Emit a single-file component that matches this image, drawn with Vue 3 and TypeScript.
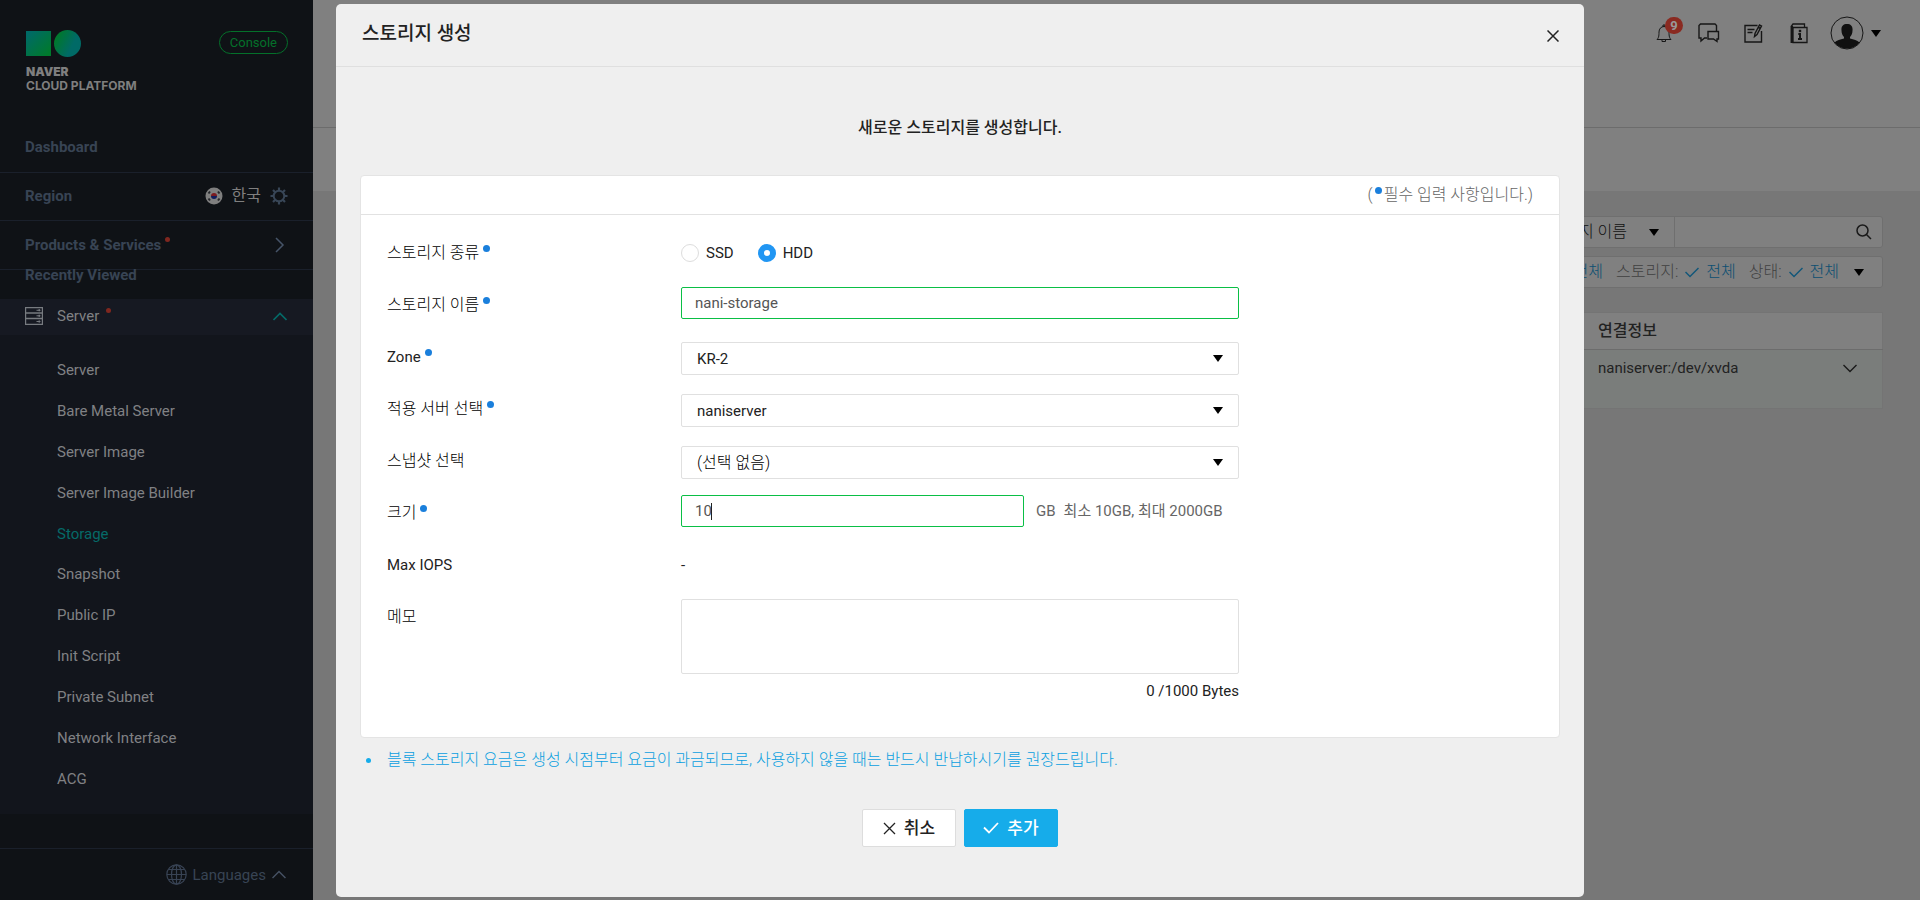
<script setup lang="ts">
import { ref } from 'vue'

interface Field {
  value: string
  label: string
}

const menu: string[] = [
  'Server', 'Bare Metal Server', 'Server Image', 'Server Image Builder', 'Storage', 'Snapshot',
  'Public IP', 'Init Script', 'Private Subnet', 'Network Interface', 'ACG',
]
const active = 'Storage'

const kinds: Field[] = [
  { value: 'ssd', label: 'SSD' },
  { value: 'hdd', label: 'HDD' },
]
const kind = ref('hdd')
const storageName = ref('nani-storage')
const zone = ref('KR-2')
const server = ref('naniserver')
const snapshot = ref('(선택 없음)')
const size = ref('10')
const memo = ref('')
</script>

<template>
  <div class="page">
    <aside class="sidebar">
      <header class="brand">
        <a class="logo" href="#" aria-label="NAVER CLOUD PLATFORM">
          <svg width="56" height="28" viewBox="0 0 56 28" aria-hidden="true">
            <defs>
              <linearGradient id="sq" x1="0" y1="0" x2="1" y2="1">
                <stop offset="0.1" stop-color="#006a66" />
                <stop offset="0.9" stop-color="#007a2c" />
              </linearGradient>
              <linearGradient id="ci" x1="0" y1="0.2" x2="1" y2="0.7">
                <stop offset="0.1" stop-color="#00782c" />
                <stop offset="0.7" stop-color="#006a66" />
              </linearGradient>
            </defs>
            <rect x="0" y="1" width="25" height="25" fill="url(#sq)" />
            <circle cx="41.500" cy="13.500" r="13.500" fill="url(#ci)" />
          </svg>
          <b class="naver">NAVER</b>
          <span class="platform">CLOUD PLATFORM</span>
        </a>
        <a class="console" href="#">Console</a>
      </header>

      <nav class="top-nav">
        <a class="nav-row dashboard" href="#">Dashboard</a>
        <div class="nav-row region-row">
          <span>Region</span>
          <span class="region">
            <svg width="18" height="18" viewBox="0 0 18 18" aria-hidden="true">
              <circle cx="9" cy="9" r="8.500" fill="#7f7f7f" />
              <path d="M6 9a3 3 0 0 1 6 0z" fill="#7c1a20" />
              <path d="M6 9a3 3 0 0 0 6 0z" fill="#101c5c" />
              <path d="M3.500 6.500l1.500-2M13 4.500l1.500 2M3.500 11.500l1.500 2M13 13.500l1.500-2" stroke="#25272b" stroke-width="2" />
            </svg>
            <span class="country">한국</span>
            <svg width="18" height="18" viewBox="0 0 18 18" fill="none" stroke="#384657" aria-hidden="true">
              <circle cx="9" cy="9" r="5.300" stroke-width="2" />
              <path d="M9 .5v3M9 14.500v3M.5 9h3M14.500 9h3M3 3l2.200 2.200M12.800 12.800L15 15M15 3l-2.200 2.200M5.200 12.800L3 15" stroke-width="2.200" />
            </svg>
          </span>
        </div>
        <a class="nav-row products" href="#">
          <span>Products &amp; Services<i class="red-dot"></i></span>
          <svg width="10" height="16" viewBox="0 0 10 16" fill="none" stroke="#465468" stroke-width="1.500" aria-hidden="true">
            <path d="M1 1l7 7-7 7" />
          </svg>
        </a>
      </nav>
      <div class="recent">Recently Viewed</div>

      <button class="group" type="button">
        <svg width="18" height="18" viewBox="0 0 18 18" fill="none" stroke="#777b80" aria-hidden="true">
          <path d="M.5.5h17v17H.500zM.500 6h17M.500 11.500h17" stroke-width="1.400" />
          <path d="M11.500 3.300h4M11.500 8.800h4M11.500 14.500h4" />
          <path d="M13.500 3.300h1.500M13.500 8.800h1.500M13.500 14.500h1.500" stroke-width="2" />
        </svg>
        <span class="group-name">Server<i class="red-dot"></i></span>
        <svg width="14" height="9" viewBox="0 0 14 9" fill="none" stroke="#056a68" stroke-width="1.600" aria-hidden="true">
          <path d="M.5 8L7 1.500 13.500 8" />
        </svg>
      </button>
      <ul class="menu">
        <li v-for="item in menu" :key="item">
          <a href="#" :class="{ active: item === active }">{{ item }}</a>
        </li>
      </ul>

      <button class="languages" type="button">
        <svg width="21" height="21" viewBox="0 0 21 21" fill="none" stroke="#384354" stroke-width="1.200" aria-hidden="true">
          <circle cx="10.500" cy="10.500" r="9.700" />
          <ellipse cx="10.500" cy="10.500" rx="5" ry="9.700" />
          <path d="M10.500 1v19M1 10.500h19M2.500 5.500h16M2.500 15.500h16" />
        </svg>
        <span>Languages</span>
        <svg width="14" height="9" viewBox="0 0 14 9" fill="none" stroke="#465163" stroke-width="1.500" aria-hidden="true">
          <path d="M.5 8L7 1.500 13.500 8" />
        </svg>
      </button>
    </aside>

    <main class="main">
      <header class="topbar">
        <button class="icon bell" type="button" aria-label="Notifications">
          <svg width="16" height="19" viewBox="0 0 16 19" fill="none" stroke="#161616" aria-hidden="true">
            <path d="M1 15.500c1.500-1.500 2-3 2-7.500 0-3 2-5.500 5-5.500s5 2.500 5 5.500c0 4.500.5 6 2 7.500zM6 16v1.500h3.500V16M7 2.500V1h2v1.500" />
          </svg>
          <span class="count">9</span>
        </button>
        <button class="icon" type="button" aria-label="Chat">
          <svg width="22" height="20" viewBox="0 0 22 20" fill="none" stroke="#161616" stroke-width="1.400" aria-hidden="true">
            <path d="M9 15H6.500L3 18v-3H1V2.500L2.500 1H17l1.500 1.500V8M10 8.500h10.500V16H19v2.500L15.500 16H10z" />
          </svg>
        </button>
        <button class="icon" type="button" aria-label="Write">
          <svg width="19" height="19" viewBox="0 0 19 19" fill="none" stroke="#161616" stroke-width="1.400" aria-hidden="true">
            <path d="M13.500 1.500H1V18h16.500V7M3.500 5.500h7M3.500 8.500h5M10.500 12.500l.5-3L15.500 1l2 1-4.500 8.500zM14.500 3.500l2 1" />
          </svg>
        </button>
        <button class="icon" type="button" aria-label="Guide">
          <svg width="18" height="21" viewBox="0 0 18 21" fill="none" stroke="#161616" stroke-width="1.300" aria-hidden="true">
            <path d="M3 4.500h14v15H3zM3 4.500L1.500 3 3 1h11.500v3" />
            <path d="M1.800 3v17" stroke-width="2.500" />
            <path d="M10 6.800v2.400" stroke-width="2.400" />
            <path d="M8.300 11H10v5M8 16h4" stroke-width="2" />
          </svg>
        </button>
        <button class="account" type="button" aria-label="Account">
          <svg width="34" height="34" viewBox="0 0 34 34" aria-hidden="true">
            <circle cx="17" cy="17" r="16" fill="none" stroke="#161616" />
            <path d="M17 8c-4 0-6 2.500-5.500 6.500 0 3 1 5 2.500 6.500v1.500c-4 1-7 1.500-9.500 4A16 16 0 0 0 29.500 26.500c-2.500-2.500-5.500-3-9.500-4V21c1.500-1.500 2.500-3.500 2.500-6.500C23 10.500 21 8 17 8z" fill="#101010" />
          </svg>
          <svg width="10" height="7" viewBox="0 0 10 7" aria-hidden="true"><path d="M0 0h10L5 7z" fill="#000" /></svg>
        </button>
      </header>
      <div class="subbar"></div>
      <div class="content">
        <div class="search-bar">
          <button class="search-kind" type="button">
            <span>스토리지 이름</span>
            <svg width="10" height="7" viewBox="0 0 10 7" aria-hidden="true"><path d="M0 0h10L5 7z" fill="#000" /></svg>
          </button>
          <input class="search-box" type="text" aria-label="검색" />
          <svg class="glass" width="16" height="16" viewBox="0 0 16 16" fill="none" stroke="#1a1a1a" stroke-width="1.500" aria-hidden="true">
            <circle cx="6.500" cy="6.500" r="5.500" /><path d="M10.500 10.500L15 15" />
          </svg>
        </div>
        <div class="filter-bar">
          <span class="pick">전체</span>
          <span>스토리지:</span>
          <svg width="14" height="11" viewBox="0 0 14 11" fill="none" stroke="#125779" stroke-width="1.500" aria-hidden="true"><path d="M.5 5L5 9.500 13.500 1" /></svg>
          <span class="pick">전체</span>
          <span>상태:</span>
          <svg width="14" height="11" viewBox="0 0 14 11" fill="none" stroke="#125779" stroke-width="1.500" aria-hidden="true"><path d="M.5 5L5 9.500 13.500 1" /></svg>
          <span class="pick">전체</span>
          <svg class="filter-arrow" width="10" height="7" viewBox="0 0 10 7" aria-hidden="true"><path d="M0 0h10L5 7z" fill="#000" /></svg>
        </div>
        <table class="grid">
          <thead>
            <tr><th>연결정보</th></tr>
          </thead>
          <tbody>
            <tr>
              <td>
                <div class="cell">
                  <span>naniserver:/dev/xvda</span>
                  <svg width="14" height="9" viewBox="0 0 14 9" fill="none" stroke="#1a1a1a" stroke-width="1.400" aria-hidden="true"><path d="M.5 1L7 7.500 13.500 1" /></svg>
                </div>
              </td>
            </tr>
          </tbody>
        </table>
      </div>
    </main>

    <div class="overlay">
      <section class="modal" role="dialog" aria-labelledby="title">
        <header class="modal-head">
          <h1 id="title">스토리지 생성</h1>
          <button class="close" type="button" aria-label="닫기">
            <svg width="12" height="12" viewBox="0 0 12 12" stroke="#222" stroke-width="1.500" aria-hidden="true"><path d="M.5.5l11 11M11.500.5l-11 11" /></svg>
          </button>
        </header>
        <p class="intro">새로운 스토리지를 생성합니다.</p>

        <form id="storage-form" class="card" @submit.prevent>
          <p class="note">(<i class="dot"></i>필수 입력 사항입니다.)</p>
          <div class="fields">
            <span id="l-kind" class="label ko">스토리지 종류<i class="dot"></i></span>
            <div class="control radios" role="radiogroup" aria-labelledby="l-kind">
              <label v-for="k in kinds" :key="k.value" class="radio">
                <input v-model="kind" type="radio" name="kind" :value="k.value" />{{ k.label }}
              </label>
            </div>

            <label class="label ko" for="name">스토리지 이름<i class="dot"></i></label>
            <div class="control"><input id="name" v-model="storageName" class="text" type="text" /></div>

            <label class="label" for="zone">Zone<i class="dot"></i></label>
            <div class="control low"><select id="zone" v-model="zone" class="select"><option>KR-2</option></select></div>

            <label class="label ko" for="server">적용 서버 선택<i class="dot"></i></label>
            <div class="control low"><select id="server" v-model="server" class="select"><option>naniserver</option></select></div>

            <label class="label ko" for="snap">스냅샷 선택</label>
            <div class="control low"><select id="snap" v-model="snapshot" class="select ko"><option>(선택 없음)</option></select></div>

            <label class="label ko" for="size">크기<i class="dot"></i></label>
            <div class="control size">
              <div class="size-box">
                <input id="size" v-model="size" class="text" type="text" />
                <i class="caret"></i>
              </div>
              <span class="unit">GB</span>
              <span class="unit">최소 10GB, 최대 2000GB</span>
            </div>

            <span class="label">Max IOPS</span>
            <div class="control plain">-</div>

            <label class="label ko" for="memo">메모</label>
            <div class="control memo">
              <textarea id="memo" v-model="memo"></textarea>
              <span class="bytes">{{ memo.length }} /1000 Bytes</span>
            </div>
          </div>
        </form>

        <ul class="notice">
          <li>블록 스토리지 요금은 생성 시점부터 요금이 과금되므로, 사용하지 않을 때는 반드시 반납하시기를 권장드립니다.</li>
        </ul>

        <footer class="actions">
          <button class="btn" type="button">
            <svg width="13" height="13" viewBox="0 0 13 13" stroke="#222" stroke-width="1.300" aria-hidden="true"><path d="M1 1l11 11M12 1L1 12" /></svg>취소
          </button>
          <button class="btn primary" type="submit" form="storage-form">
            <svg width="16" height="12" viewBox="0 0 16 12" fill="none" stroke="#fff" stroke-width="1.800" aria-hidden="true"><path d="M1 5.500L6 10.500 15 1" /></svg>추가
          </button>
        </footer>
      </section>
    </div>
  </div>
</template>

<style>
body {
  margin: 0;
  background: #777;
}
</style>

<style scoped>
* {
  box-sizing: border-box;
}
.page {
  position: relative;
  display: flex;
  min-height: 100vh;
  overflow: hidden;
  font: 15px/20px Roboto, "Noto Sans CJK KR", sans-serif;
  color: #222;
}
a {
  color: inherit;
  text-decoration: none;
}
button {
  font: inherit;
  color: inherit;
  background: none;
  border: 0;
  padding: 0;
}
svg {
  display: block;
  flex: none;
}
.sidebar {
  flex: none;
  width: 313px;
  display: flex;
  flex-direction: column;
  background: #0f1216;
  color: #384454;
}
.brand {
  display: flex;
  justify-content: space-between;
  align-items: flex-start;
  height: 123px;
  padding: 30px 25px 0 26px;
}
.logo {
  display: flex;
  flex-direction: column;
  font-family: Inter, sans-serif;
  color: #7f7f7f;
}
.naver {
  margin-top: 7px;
  font-size: 12px;
  font-weight: 900;
  line-height: 14px;
}
.platform {
  font-size: 12px;
  font-weight: 700;
  line-height: 13px;
}
.console {
  height: 23px;
  margin-top: 1px;
  padding: 0 10px;
  border: 1px solid #04702a;
  border-radius: 12px;
  font-size: 13px;
  line-height: 21px;
  color: #04702a;
}
.nav-row {
  display: flex;
  justify-content: space-between;
  align-items: center;
  height: 48px;
  padding: 0 28px 0 25px;
  border-bottom: 1px solid #1a202b;
  font-weight: 700;
}
.dashboard {
  height: 50px;
  padding-bottom: 2px;
}
.region-row {
  padding-right: 25px;
  padding-bottom: 2px;
}
.products {
  height: 49px;
}
.region {
  display: flex;
  align-items: center;
  gap: 9px;
}
.country {
  font-size: 16px;
  font-weight: 400;
  color: #7f7f7f;
}
.red-dot {
  display: inline-block;
  width: 5px;
  height: 5px;
  margin-left: 4px;
  border-radius: 50%;
  background: #80271f;
  vertical-align: 8px;
}
.recent {
  height: 29px;
  padding-left: 25px;
  line-height: 11px;
  font-weight: 700;
}
.group {
  display: flex;
  align-items: center;
  height: 36px;
  padding: 0 26px 2px 25px;
  background: #161922;
  color: #808184;
}
.group-name {
  flex: 1;
  margin-left: 14px;
  text-align: left;
}
.group-name .red-dot {
  margin-left: 7px;
}
.menu {
  display: flex;
  flex-direction: column;
  height: 479px;
  margin: 0;
  padding: 15px 0 15px 57px;
  list-style: none;
  background: #12151c;
  color: #808184;
}
.menu li {
  flex: 1;
  display: flex;
  align-items: center;
}
.menu .active {
  color: #056a68;
}
.languages {
  display: flex;
  justify-content: flex-end;
  align-items: center;
  gap: 6px;
  height: 52px;
  margin-top: auto;
  padding-right: 27px;
  border-top: 1px solid #1a202b;
}
.main {
  flex: 1;
  min-width: 0;
  background: #777;
}
.topbar {
  display: flex;
  justify-content: flex-end;
  align-items: flex-start;
  gap: 26px;
  height: 128px;
  padding: 16px 39px 0 0;
  background: #808080;
  border-bottom: 1px solid #6c6c6c;
}
.icon {
  position: relative;
  display: flex;
  align-items: center;
  justify-content: center;
  width: 19px;
  height: 34px;
}
.bell .count {
  position: absolute;
  top: 1px;
  left: 11px;
  width: 18px;
  height: 17px;
  border-radius: 9px;
  background: #8a2a21;
  font-size: 13px;
  font-weight: 700;
  line-height: 17px;
  color: #999;
}
.account {
  display: flex;
  align-items: center;
  gap: 7px;
  margin-left: -4px;
}
.subbar {
  height: 63px;
  background: #808080;
}
.content {
  display: flex;
  flex-direction: column;
  align-items: flex-end;
  padding: 25px 37px 0;
  font-size: 16px;
}
.search-bar,
.filter-bar {
  display: flex;
  align-items: center;
  width: 420px;
  height: 32px;
  border: 1px solid #6f6f6f;
  border-radius: 3px;
  background: #808080;
}
.search-kind {
  display: flex;
  align-items: center;
  justify-content: flex-end;
  gap: 22px;
  width: 211px;
  height: 100%;
  padding-right: 15px;
  border-right: 1px solid #6f6f6f;
  font-weight: 300;
  color: #111;
}
.search-box {
  flex: 1;
  min-width: 0;
  height: 100%;
  border: 0;
  background: none;
}
.glass {
  margin: 0 10px;
}
.filter-bar {
  justify-content: flex-end;
  gap: 7px;
  margin-top: 8px;
  padding-right: 18px;
  font-weight: 300;
  color: #404040;
}
.filter-bar .pick {
  color: #0c4f72;
}
.filter-bar .pick:not(:last-of-type) {
  margin-right: 6px;
}
.filter-arrow {
  margin-left: 8px;
}
.grid {
  width: 420px;
  margin-top: 24px;
  border-collapse: collapse;
  background: #808080;
  border: 1px solid #747474;
}
.grid th {
  height: 37px;
  padding: 0 0 0 134px;
  border-bottom: 1px solid #6c6c6c;
  font-weight: 500;
  text-align: left;
}
.grid td {
  height: 59px;
  padding: 8px 25px 0 134px;
  vertical-align: top;
  background: #7a7d7b;
  font-size: 15px;
}
.cell {
  display: flex;
  align-items: center;
  justify-content: space-between;
}
.overlay {
  position: absolute;
  inset: 0;
  display: flex;
  justify-content: center;
  align-items: flex-start;
  padding-top: 4px;
}
.modal {
  width: 65%;
  min-height: calc(100vh - 7px);
  border-radius: 5px;
  background: #efefef;
}
.modal-head {
  display: flex;
  justify-content: space-between;
  align-items: center;
  height: 63px;
  padding: 0 25px 0 26px;
  border-bottom: 1px solid #dfdfdf;
}
h1 {
  margin: 0 0 2px;
  font-size: 19px;
  font-weight: 500;
  line-height: 28px;
}
.close {
  margin-top: 2px;
}
.intro {
  margin: 51px 0 37px;
  font-size: 16px;
  font-weight: 500;
  text-align: center;
}
.card {
  margin: 0 24px;
  border: 1px solid #e4e4e4;
  border-radius: 4px;
  background: #fff;
}
.note {
  margin: 0;
  height: 39px;
  padding-right: 26px;
  border-bottom: 1px solid #e2e2e2;
  font-size: 16px;
  font-weight: 300;
  line-height: 38px;
  text-align: right;
  color: #666;
}
.dot {
  display: inline-block;
  width: 7px;
  height: 7px;
  margin: 0 2px;
  border-radius: 50%;
  background: #1a7fdc;
  vertical-align: 6px;
}
.fields {
  display: grid;
  grid-template-columns: 294px minmax(0, 558px);
  grid-template-rows: repeat(7, 52px) auto;
  padding: 20px 25px 36px 26px;
}
.label {
  padding-top: 8px;
}
.ko {
  font-size: 16px;
  font-weight: 300;
  color: #000;
}
.label .dot {
  margin-left: 4px;
}
.control {
  display: flex;
  align-items: flex-start;
}
.low {
  padding-top: 3px;
}
.radios {
  gap: 24px;
  padding-top: 8px;
}
.radio {
  display: flex;
  align-items: center;
  gap: 7px;
}
.radio input {
  appearance: none;
  width: 18px;
  height: 18px;
  margin: 0;
  border: 1px solid #ddd;
  border-radius: 50%;
  background: #fff;
}
.radio input:checked {
  border: 6px solid #2196f3;
}
.text,
.select,
textarea {
  width: 100%;
  margin: 0;
  border: 1px solid #e0e0e0;
  border-radius: 2px;
  outline: 0;
  background: #fff;
  font-family: inherit;
  font-size: 15px;
  line-height: 20px;
  color: #222;
}
.text {
  height: 32px;
  padding: 0 13px;
  border-color: #0abf45;
  color: #555;
}
.select {
  height: 33px;
  padding: 0 15px;
  appearance: none;
  background: #fff url("data:image/svg+xml,%3Csvg xmlns='http://www.w3.org/2000/svg' width='10' height='7'%3E%3Cpath d='M0 0h10L5 7z'/%3E%3C/svg%3E") no-repeat right 15px center;
}
.select.ko {
  font-size: 16px;
  color: #000;
}
.size-box {
  position: relative;
  flex: none;
  width: 343px;
}
.caret {
  position: absolute;
  top: 8px;
  left: 30px;
  width: 1px;
  height: 17px;
  background: #222;
}
.unit {
  margin-left: 12px;
  line-height: 32px;
  color: #666;
}
.unit + .unit {
  margin-left: 8px;
}
.plain {
  padding-top: 8px;
}
.memo {
  flex-direction: column;
  align-items: flex-end;
}
textarea {
  display: block;
  height: 75px;
  resize: none;
}
.bytes {
  margin-top: 7px;
}
.notice {
  margin: 12px 24px 0;
  padding: 0;
  list-style: none;
  font-size: 16px;
  font-weight: 300;
  color: #0a9fe0;
}
.notice li {
  display: flex;
  align-items: center;
  padding-left: 6px;
  gap: 16px;
}
.notice li::before {
  content: "";
  width: 5px;
  height: 5px;
  border-radius: 50%;
  background: #16acea;
}
.actions {
  display: flex;
  justify-content: center;
  gap: 8px;
  margin-top: 39px;
}
.btn {
  display: flex;
  align-items: center;
  justify-content: center;
  gap: 8px;
  width: 94px;
  height: 38px;
  border: 1px solid #ddd;
  border-radius: 2px;
  background: #fff;
  font-size: 17px;
  font-weight: 500;
}
.primary {
  border-color: #16acea;
  background: #16acea;
  color: #fff;
}
</style>
